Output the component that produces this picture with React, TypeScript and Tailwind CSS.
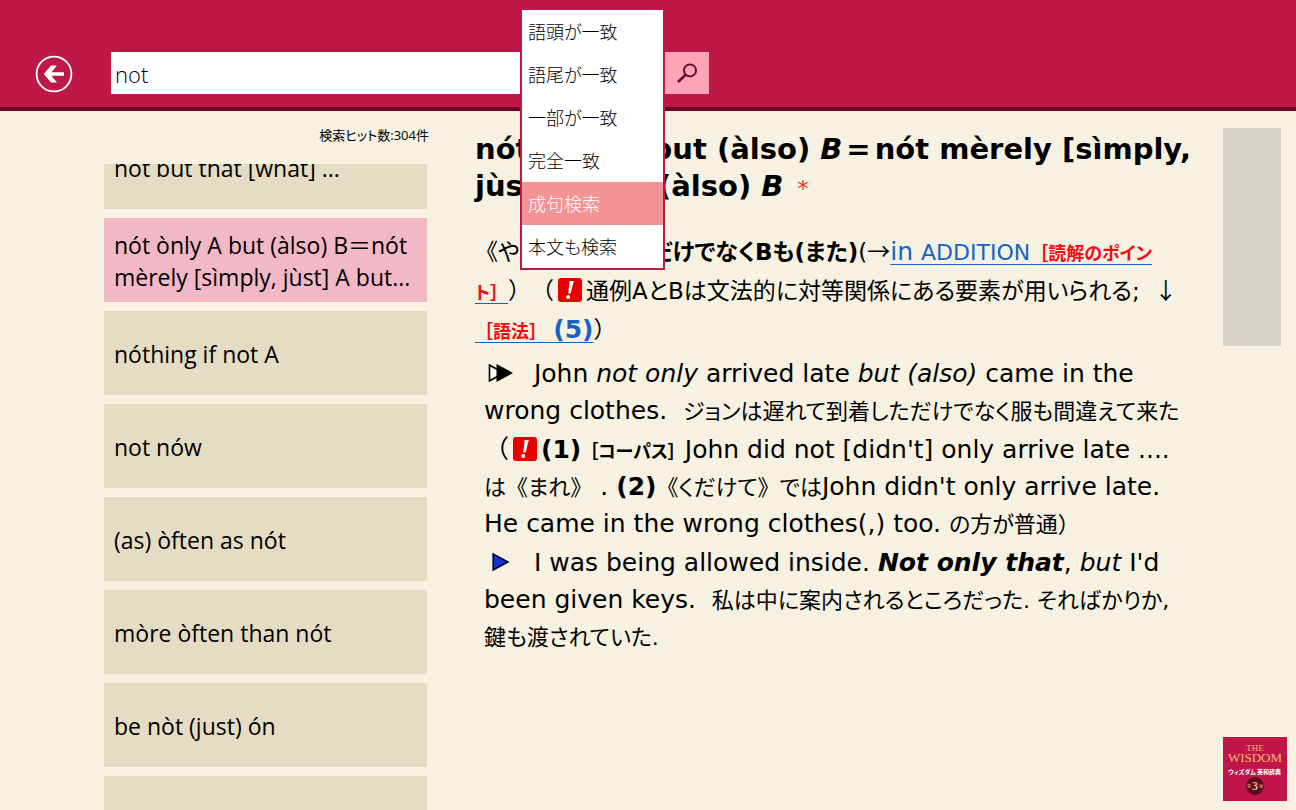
import { useState } from 'react';
import type { ReactNode } from 'react';

interface Entry {
  id: number;
  label: string;
}

const matchModes = ['語頭が一致', '語尾が一致', '一部が一致', '完全一致', '成句検索', '本文も検索'];

const entries: Entry[] = [
  { id: 1, label: 'not but that [what] ...' },
  { id: 2, label: 'nót ònly A but (àlso) B＝nót mèrely [sìmply, jùst] A but...' },
  { id: 3, label: 'nóthing if not A' },
  { id: 4, label: 'not nów' },
  { id: 5, label: '(as) òften as nót' },
  { id: 6, label: 'mòre òften than nót' },
  { id: 7, label: 'be nòt (just) ón' },
  { id: 8, label: '' },
];

function BackIcon() {
  return (
    <svg viewBox="0 0 38 38" className="size-[38px]" fill="none" aria-hidden="true">
      <circle cx="19" cy="19" r="17.4" stroke="#fff" strokeWidth="1.8" />
      <path d="M8.8 19 16 10.6H22L16.4 17.2H29V20.8H16.4L22 27.4H16Z" fill="#fff" />
    </svg>
  );
}

function SearchIcon() {
  return (
    <svg viewBox="0 0 22 22" className="size-[22px]" fill="none" stroke="#6d0a2c" aria-hidden="true">
      <circle cx="14" cy="8.4" r="6" strokeWidth="2" />
      <path d="M9.6 12.8 2 20" strokeWidth="2.8" />
    </svg>
  );
}

function NoteIcon() {
  return (
    <svg viewBox="0 0 24 24" className="mx-1 inline-block size-6 align-[-3px]" role="img" aria-label="注意">
      <rect width="24" height="24" rx="3" fill="#e60000" />
      <path d="M11.6 3H15.8L12.6 15.4H10.2Z" fill="#fff" />
      <circle cx="10.2" cy="19" r="2" fill="#fff" />
    </svg>
  );
}

function DoubleArrow() {
  return (
    <svg viewBox="0 0 26 20" className="inline-block h-5 w-[26px] align-[-1px]" aria-hidden="true">
      <path d="M1.5 2.2V17.8L16 10Z" fill="#fff" stroke="#000" strokeWidth="1.6" />
      <path d="M8.5 1V19L25 10Z" fill="#000" />
    </svg>
  );
}

function BlueArrow() {
  return (
    <svg viewBox="0 0 18 20" className="inline-block h-5 w-[18px] align-[-1px]" aria-hidden="true">
      <path d="M1.2 2V18L16 10Z" fill="#1432d2" stroke="#00002a" strokeWidth="1.6" />
    </svg>
  );
}

function Tag({ children }: { children: ReactNode }) {
  return <span className="text-[18px] leading-none font-bold text-[#f50a14]">{children}</span>;
}

// Brackets and arrows keep their full em width.
function Wide({ children }: { children: ReactNode }) {
  return <span className="font-['Noto_Sans_CJK_JP',sans-serif] [font-feature-settings:normal]">{children}</span>;
}

// Japanese runs are set a little smaller than the Latin text around them.
function Ja({ children }: { children: ReactNode }) {
  return <span className="text-[22px] leading-none">{children}</span>;
}

function WisdomLogo() {
  return (
    <svg viewBox="0 0 64 64" className="size-16" role="img" aria-label="ウィズダム英和辞典 第3版">
      <rect width="64" height="64" fill="#c1154a" />
      <g textAnchor="middle" fill="#f3b673" fontFamily="'Liberation Serif', serif">
        <text x="32" y="14" fontSize="9">THE</text>
        <text x="32" y="25" fontSize="13">WISDOM</text>
      </g>
      <g textAnchor="middle" fill="#fff" fontWeight="700" fontFamily="'Noto Sans CJK JP', sans-serif">
        <text x="19" y="37" fontSize="6">ウィズダム</text>
        <text x="46" y="37" fontSize="6">英和辞典</text>
      </g>
      <circle cx="32" cy="49" r="9" fill="#5c0a20" />
      <g textAnchor="middle" fill="#f3b673">
        <text x="32" y="53" fontSize="12" fontWeight="700" fontFamily="'Liberation Serif', serif">3</text>
        <text x="26" y="51" fontSize="4" fontFamily="'Noto Sans CJK JP', sans-serif">第</text>
        <text x="38" y="51" fontSize="4" fontFamily="'Noto Sans CJK JP', sans-serif">版</text>
      </g>
    </svg>
  );
}

function SearchBar() {
  const [query, setQuery] = useState('not');
  const [mode, setMode] = useState('成句検索');

  return (
    <form className="flex h-[42px]" onSubmit={(event) => event.preventDefault()}>
      <input
        type="text"
        value={query}
        onChange={(event) => setQuery(event.target.value)}
        aria-label="検索語"
        className="w-[409px] bg-white px-1 pt-0.5 font-['Open_Sans',sans-serif] text-[22px] font-light text-black outline-none"
      />
      <div className="relative w-[145px] bg-white">
        <ul
          role="listbox"
          aria-label="検索方法"
          className="absolute -top-11 left-0 z-10 w-[145px] border-2 border-[#be1848] bg-white"
        >
          {matchModes.map((item) => (
            <li key={item} role="option" aria-selected={item === mode}>
              <button
                type="button"
                onClick={() => setMode(item)}
                className={`block h-[43px] w-full px-1.5 pt-0.5 text-left text-[18px] font-light ${
                  item === mode ? 'bg-[#f29396] text-white' : 'text-black'
                }`}
              >
                {item}
              </button>
            </li>
          ))}
        </ul>
      </div>
      <button type="submit" aria-label="検索" className="flex w-11 items-center justify-center bg-[#ffa3b7]">
        <SearchIcon />
      </button>
    </form>
  );
}

function ResultList() {
  const [selected, setSelected] = useState(2);

  return (
    <nav className="flex w-[323px] shrink-0 flex-col" aria-label="検索結果">
      <p className="-mr-0.5 pt-3 pb-4 text-right text-[13px] leading-[25px]">検索ヒット数:304件</p>
      <div className="min-h-0 flex-1 overflow-hidden">
        <ul className="-mt-[39px] flex flex-col gap-[9px]">
          {entries.map((entry) => (
            <li key={entry.id}>
              <button
                type="button"
                onClick={() => setSelected(entry.id)}
                aria-label={entry.label || '次の項目'}
                className={`flex h-[84px] w-full items-center px-[10px] pt-0.5 text-left text-[23px] leading-8 ${
                  entry.id === selected ? 'bg-[#f2b8c6]' : 'bg-[#e4dcc3]'
                }`}
              >
                {entry.label}
              </button>
            </li>
          ))}
        </ul>
      </div>
    </nav>
  );
}

function Article() {
  return (
    <article className="min-w-0 flex-1 pt-5 font-['DejaVu_Sans','Noto_Sans_CJK_JP',sans-serif] text-[25px] whitespace-nowrap">
      <h1 className="text-[29px] leading-[37px] font-bold">
        nót ònly A but (àlso) <i>B</i>
        <span className="mx-1">=</span>nót mèrely [sìmply,
        <br />
        jùst] A but (àlso) <i>B</i> <span className="ml-1 text-[22px] leading-none font-normal text-[#f5281e]">*</span>
      </h1>

      <p className="mt-[27px] text-[23px] leading-[37px]">
        <Wide>《</Wide>やや書<Wide>》</Wide><b>単にAだけでなくBも(また)</b>(<Wide>→</Wide>
        <a href="#addition" className="text-[25px] leading-none text-[#1464c8] underline decoration-1 underline-offset-4">
          in <span className="text-[22px] leading-none">ADDITION</span>
          <Tag><Wide>［</Wide>読解のポイン</Tag>
        </a>
        <br />
        <a href="#addition" className="text-[#1464c8] underline decoration-1 underline-offset-4">
          <Tag>ト<Wide>］</Wide></Tag>
        </a>
        <Wide>）（</Wide>
        <NoteIcon />
        通例AとBは文法的に対等関係にある要素が用いられる;{'\u00a0 '}<Wide>↓</Wide>
        <br />
        <a href="#usage" className="text-[#1464c8] underline decoration-1 underline-offset-4">
          <Tag><Wide>［</Wide>語法<Wide>］</Wide> </Tag>
          <b className="text-[25px] leading-none">(5)</b>
        </a>
        <Wide>）</Wide>
      </p>

      <div className="mt-1.5 flex flex-col gap-0.5 pl-[9px] leading-[37px]">
        <p>
          <span className="mx-1">
            <DoubleArrow />
          </span>
          {'\u00a0 '}John <i>not only</i> arrived late <i>but (also)</i> came in the
          <br />
          wrong clothes.{'\u00a0 '}
          <Ja>ジョンは遅れて到着しただけでなく服も間違えて来た</Ja>
          <br />
          <Wide>（</Wide>
          <NoteIcon />
          <b>(1)</b> <b className="text-[18px] leading-none">［コーパス］</b> John did not [didn't] only arrive late ....
          <br />
          <Ja>は<Wide>《</Wide>まれ<Wide>》</Wide></Ja> . <b>(2)</b>
          <Ja><Wide>《</Wide>くだけて<Wide>》</Wide>では</Ja>
          John didn't only arrive late.
          <br />
          He came in the wrong clothes(,) too. <Ja>の方が普通<Wide>）</Wide></Ja>
        </p>
        <p>
          <span className="mx-2">
            <BlueArrow />
          </span>
          {'\u00a0 '}I was being allowed inside. <b><i>Not only that</i></b>, <i>but</i> I'd
          <br />
          been given keys.{'\u00a0 '}
          <Ja>私は中に案内されるところだった. そればかりか,</Ja>
          <br />
          <Ja>鍵も渡されていた.</Ja>
        </p>
      </div>
    </article>
  );
}

export default function App() {
  return (
    <div
      lang="ja"
      className="flex h-screen flex-col overflow-hidden bg-[#f7f1e1] font-['Open_Sans','Noto_Sans_CJK_JP',sans-serif] text-black [font-feature-settings:'palt'] [text-spacing-trim:space-all]"
    >
      <header className="flex h-[111px] shrink-0 items-start border-b-4 border-[#6c0026] bg-[#be1848] pt-[52px] pl-[35px]">
        <button type="button" aria-label="戻る" className="mt-[3px] mr-[38px]">
          <BackIcon />
        </button>
        <SearchBar />
      </header>

      <main className="flex min-h-0 flex-1 pl-[104px]">
        <ResultList />
        <div className="flex min-w-0 flex-1 pl-12">
          <Article />
          <aside className="flex w-[73px] shrink-0 flex-col justify-between pt-[17px] pb-[9px]">
            <div className="h-[218px] w-[58px] bg-[#d6d3c7]" />
            <WisdomLogo />
          </aside>
        </div>
      </main>
    </div>
  );
}
